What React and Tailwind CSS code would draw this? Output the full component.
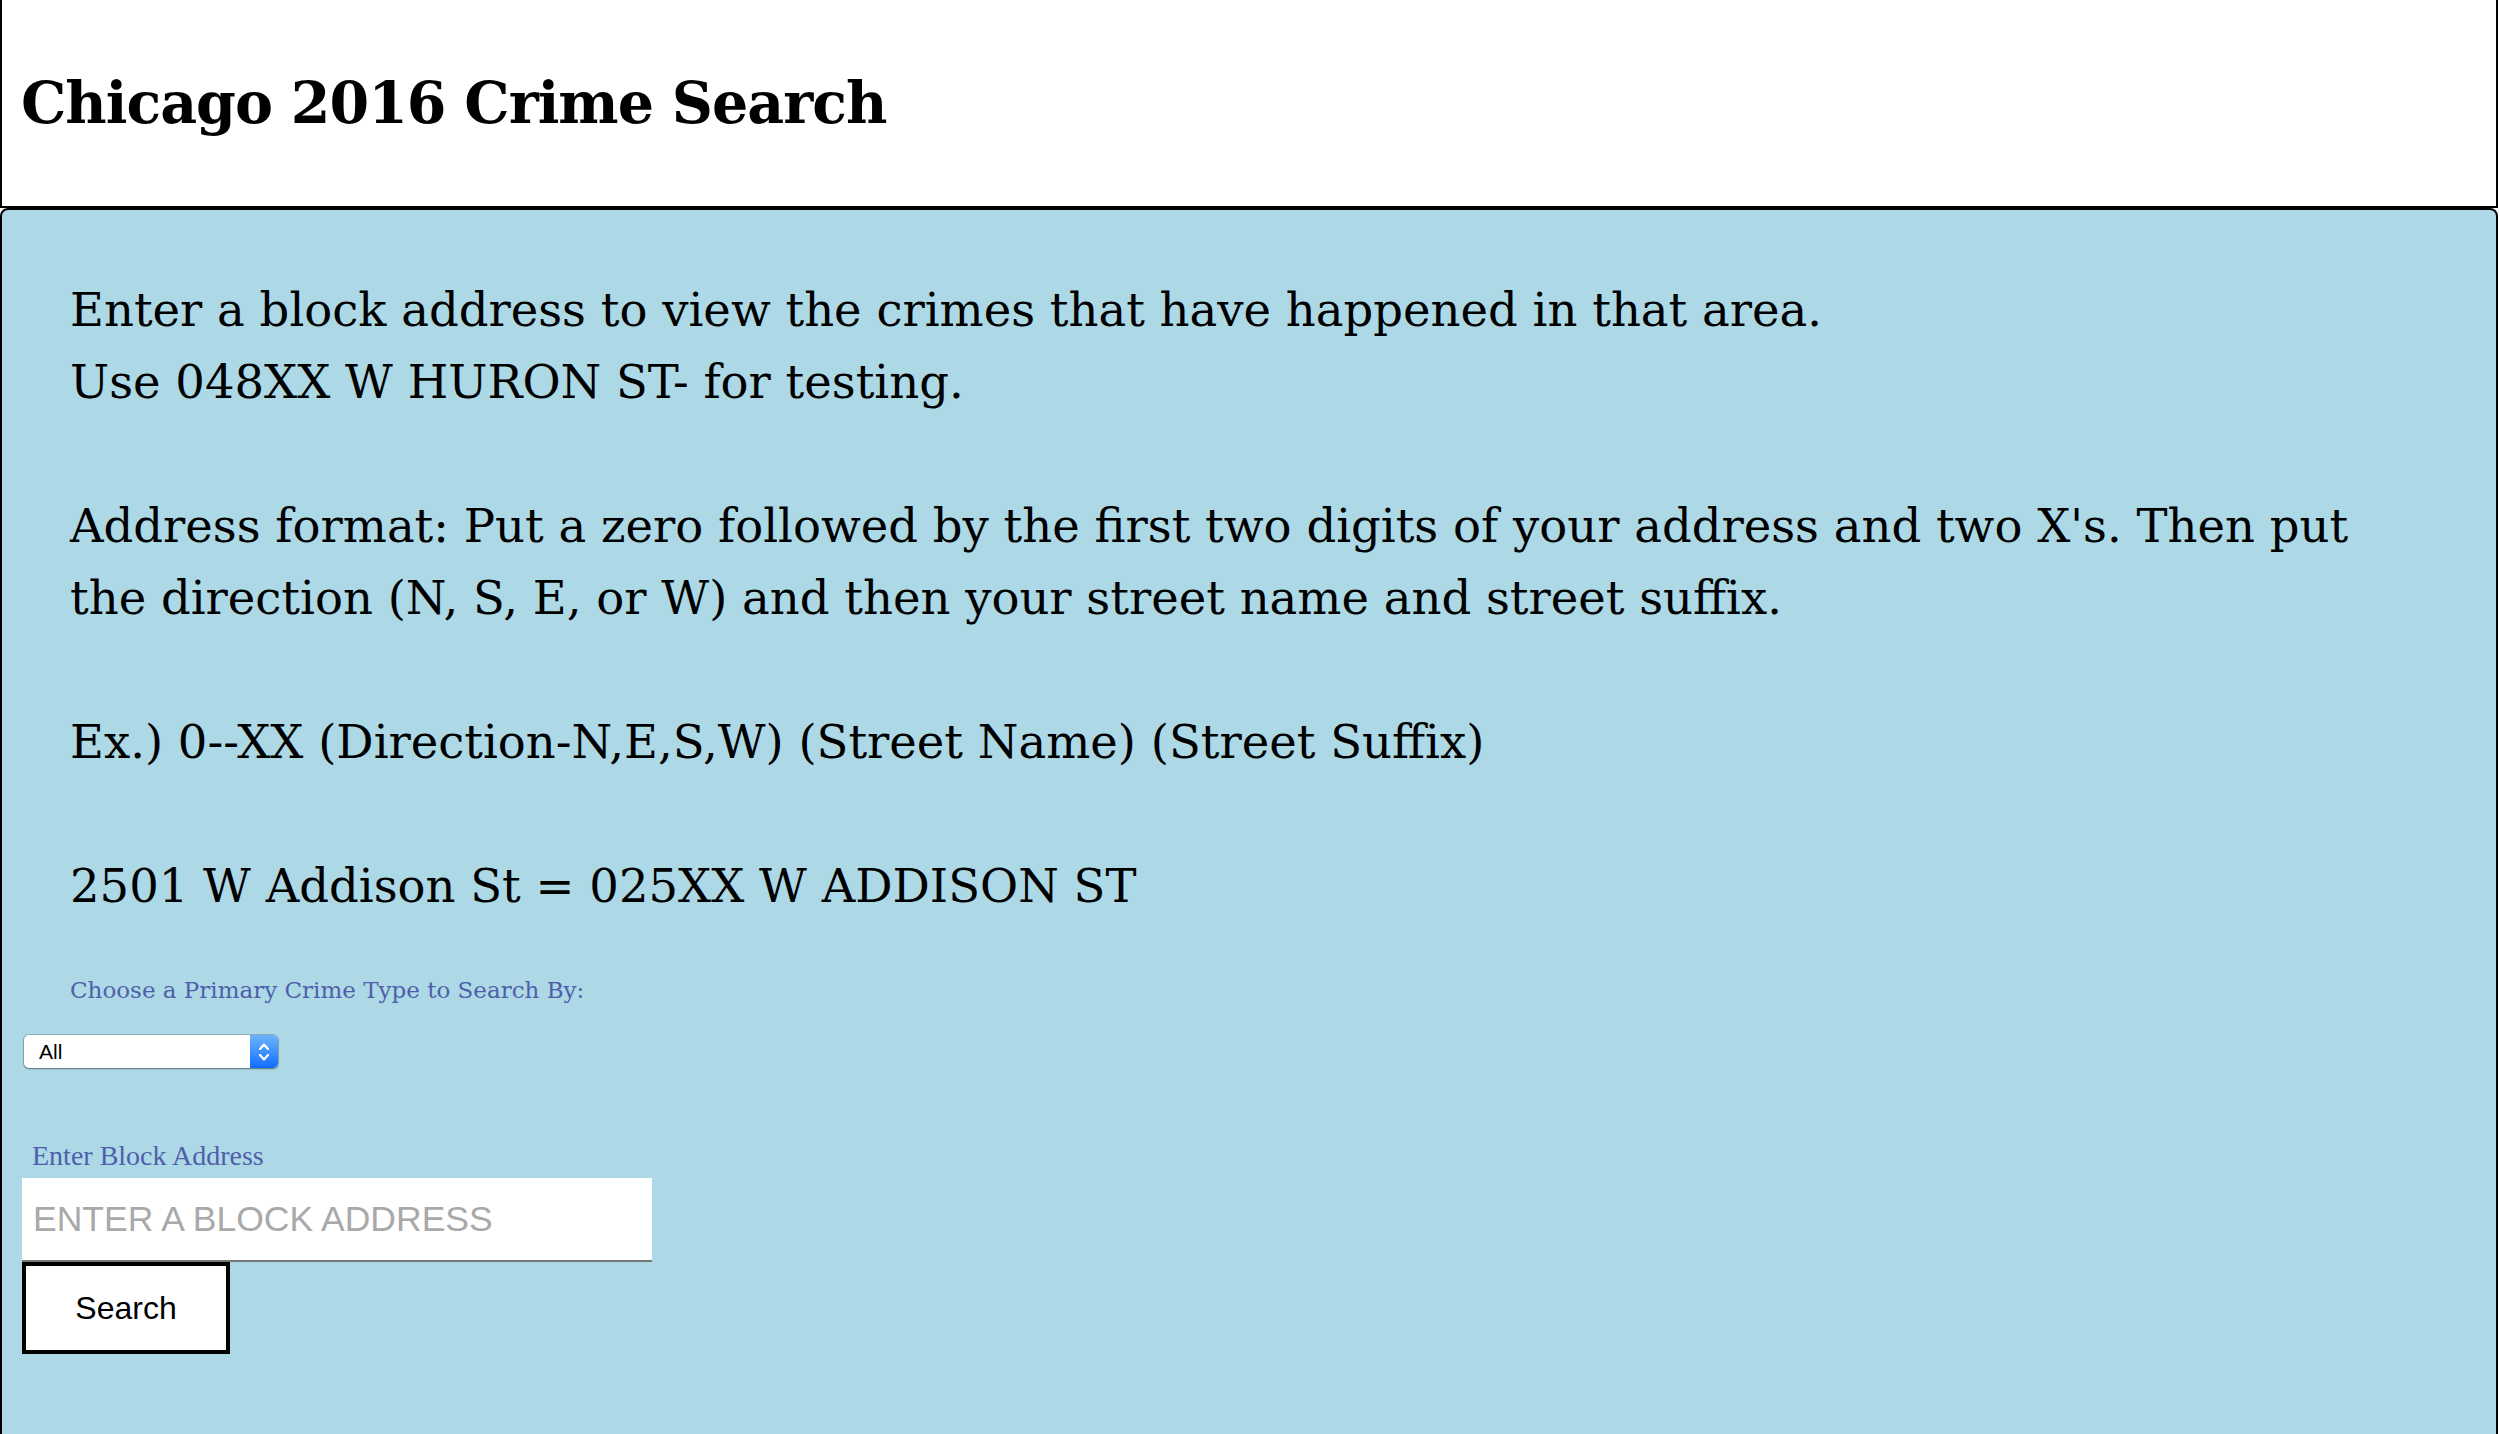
import { useState } from 'react'

export default function App() {
    const [crimeType, setCrimeType] = useState('All')
    const [address, setAddress] = useState('')

    return (
        <div className="min-h-screen w-[2498px] bg-white">
            <header className="flex h-[208px] items-center border-x-2 border-b-2 border-black bg-white px-[19px]">
                <h1 className="font-['DejaVu_Serif',serif] text-[57px] font-bold tracking-[-1px] text-black">Chicago 2016 Crime Search</h1>
            </header>

            <main className="min-h-[1226px] rounded-t-[8px] border-2 border-black bg-[#add8e6] pb-20">
                <div className="px-[68px] pt-[64px] font-['DejaVu_Serif',serif] text-[46.5px] leading-[72px] text-black">
                    <p>Enter a block address to view the crimes that have happened in that area.</p>
                    <p>Use 048XX W HURON ST- for testing.</p>
                    <p className="mt-[72px]">Address format: Put a zero followed by the first two digits of your address and two X's. Then put the direction (N, S, E, or W) and then your street name and street suffix.</p>
                    <p className="mt-[72px]">Ex.) 0--XX (Direction-N,E,S,W) (Street Name) (Street Suffix)</p>
                    <p className="mt-[72px]">2501 W Addison St = 025XX W ADDISON ST</p>
                </div>

                <label className="mt-[50px] block pl-[68px] font-['DejaVu_Serif',serif] text-[23px] leading-[36px] text-[#4f5faa]">
                    Choose a Primary Crime Type to Search By:
                </label>

                <div className="relative ml-[22px] mt-[27px] h-[33px] w-[254px] rounded-[5px] bg-white shadow-[0_0_0_1px_rgba(0,0,0,0.18),0_1px_2px_rgba(0,0,0,0.35)]">
                    <select
                        value={crimeType}
                        onChange={(e) => setCrimeType(e.target.value)}
                        className="h-full w-full appearance-none rounded-[5px] bg-transparent pl-[15px] pr-[30px] font-['Liberation_Sans',sans-serif] text-[21px] text-black outline-none"
                    >
                        <option>All</option>
                        <option>Theft</option>
                        <option>Battery</option>
                        <option>Criminal Damage</option>
                        <option>Narcotics</option>
                        <option>Assault</option>
                    </select>
                    <div className="pointer-events-none absolute inset-y-0 right-0 flex w-[28px] items-center justify-center rounded-r-[5px] bg-gradient-to-b from-[#6cb3fa] to-[#0a6cff]">
                        <svg width="12" height="22" viewBox="0 0 12 22" fill="none" stroke="white" strokeWidth="2.2" strokeLinecap="round" strokeLinejoin="round">
                            <path d="M2 8 L6 3.5 L10 8" />
                            <path d="M2 14 L6 18.5 L10 14" />
                        </svg>
                    </div>
                </div>

                <label className="mt-[70px] block pl-[30px] font-['Liberation_Serif',serif] text-[28px] leading-[36px] text-[#4f5faa]">
                    Enter Block Address
                </label>

                <input
                    value={address}
                    onChange={(e) => setAddress(e.target.value)}
                    placeholder="ENTER A BLOCK ADDRESS"
                    className="ml-[20px] mt-[4px] block h-[84px] w-[630px] border-b-2 border-[#777777] bg-white px-[11px] font-['Liberation_Sans',sans-serif] text-[35.5px] text-black outline-none placeholder:text-[#a9a9a9]"
                />

                <button className="ml-[20px] block h-[92px] w-[208px] border-4 border-black bg-white font-['Liberation_Sans',sans-serif] text-[32px] text-black">
                    Search
                </button>
            </main>
        </div>
    )
}
